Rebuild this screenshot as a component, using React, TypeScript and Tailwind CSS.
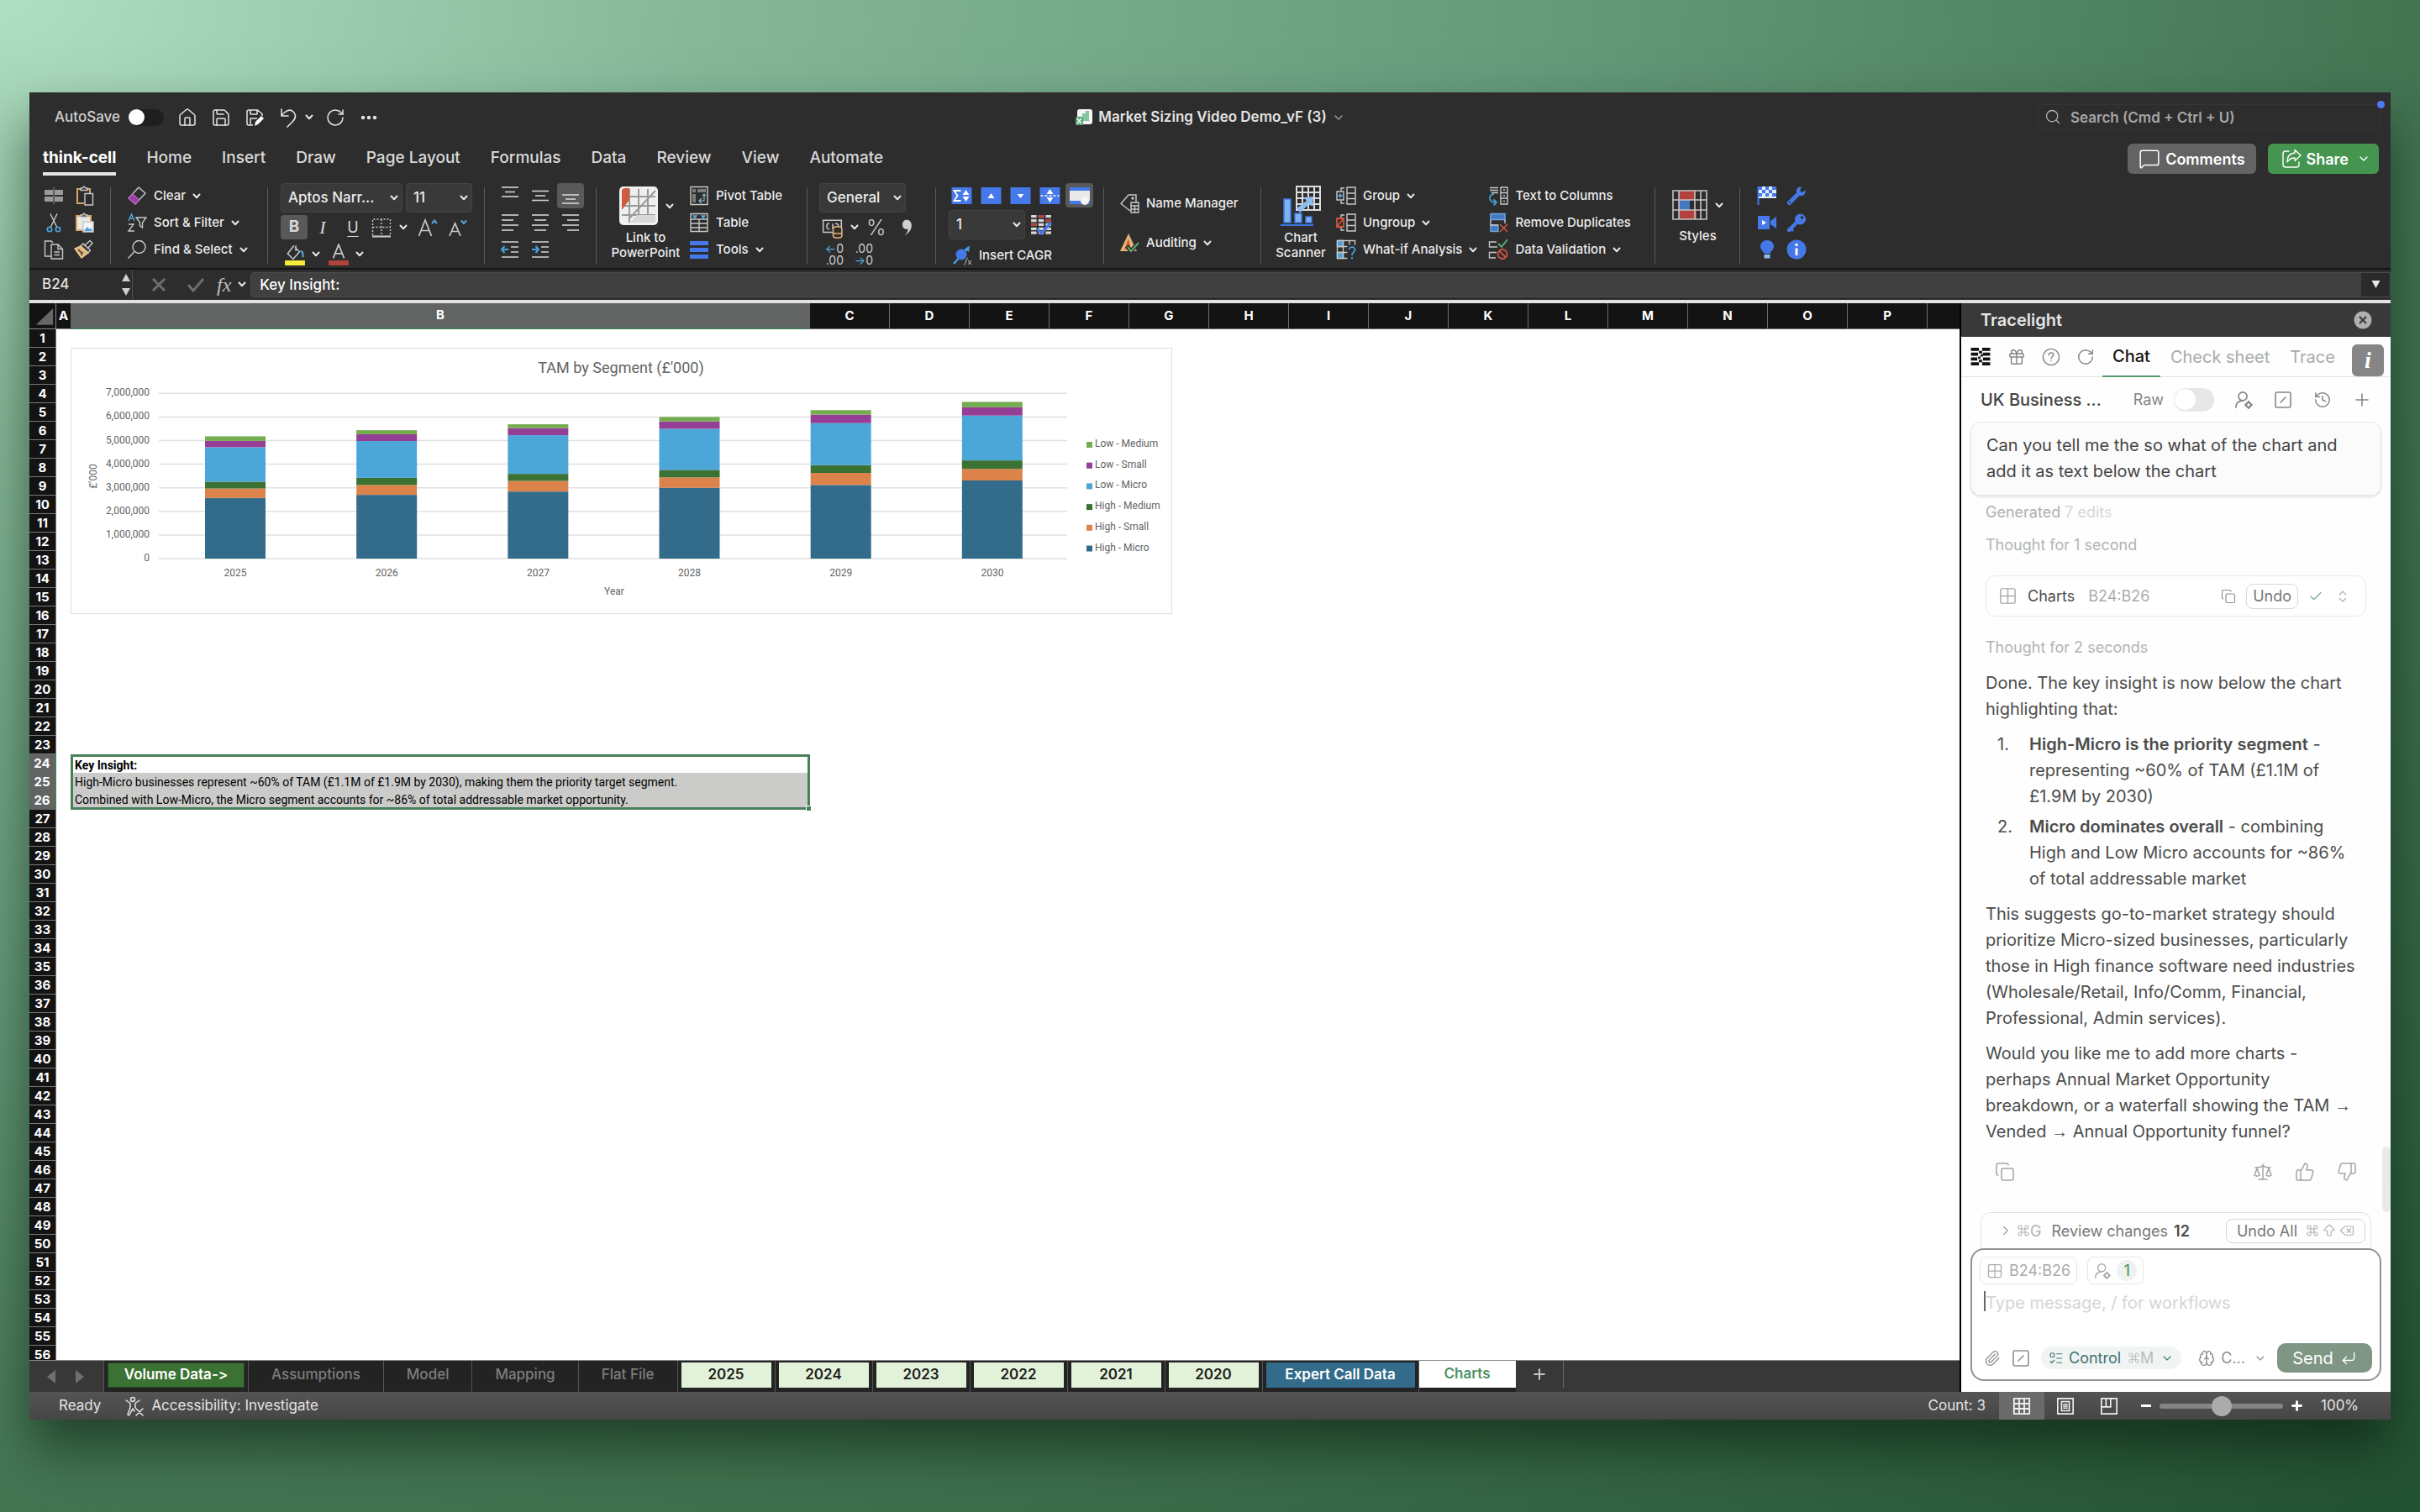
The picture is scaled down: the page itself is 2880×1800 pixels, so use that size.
import { useState } from 'react'
import type { ReactNode } from 'react'
import {
    ArrowBigUp,
    Brain,
    Check,
    ChevronDown,
    ChevronRight,
    ChevronsUpDown,
    Command,
    Copy,
    CornerDownLeft,
    Delete,
    Ellipsis,
    Gift,
    Grid2x2,
    History,
    House,
    ListTodo,
    MessageSquare,
    Paperclip,
    Plus,
    RotateCw,
    Save,
    Scale,
    Search,
    SquareSlash,
    ThumbsDown,
    ThumbsUp
} from 'lucide-react'

const MENU_TABS = ['think-cell', 'Home', 'Insert', 'Draw', 'Page Layout', 'Formulas', 'Data', 'Review', 'View', 'Automate']
const COLUMNS = ['C', 'D', 'E', 'F', 'G', 'H', 'I', 'J', 'K', 'L', 'M', 'N', 'O', 'P']
const ROWS = Array.from({ length: 56 }, (_, i) => i + 1)

const CELLS: Record<number, string> = {
    24: 'Key Insight:',
    25: 'High-Micro businesses represent ~60% of TAM (£1.1M of £1.9M by 2030), making them the priority target segment.',
    26: 'Combined with Low-Micro, the Micro segment accounts for ~86% of total addressable market opportunity.'
}

const SERIES = [
    { name: 'High - Micro', color: '#336b8b' },
    { name: 'High - Small', color: '#db834a' },
    { name: 'High - Medium', color: '#3b7233' },
    { name: 'Low - Micro', color: '#4ca6d8' },
    { name: 'Low - Small', color: '#953e95' },
    { name: 'Low - Medium', color: '#74ac50' }
]

// running totals per year, in millions
const TAM = [
    { year: 2025, tops: [2.57, 2.97, 3.26, 4.72, 4.99, 5.18] },
    { year: 2026, tops: [2.7, 3.12, 3.42, 4.98, 5.27, 5.44] },
    { year: 2027, tops: [2.84, 3.29, 3.59, 5.23, 5.53, 5.69] },
    { year: 2028, tops: [3.0, 3.44, 3.76, 5.5, 5.81, 6.0] },
    { year: 2029, tops: [3.12, 3.63, 3.96, 5.74, 6.1, 6.29] },
    { year: 2030, tops: [3.31, 3.8, 4.16, 6.06, 6.41, 6.64] }
]

type SheetTab = { name: string; kind: 'green' | 'plain' | 'year' | 'blue' | 'active' }

const SHEET_TABS: SheetTab[] = [
    { name: 'Volume Data->', kind: 'green' },
    { name: 'Assumptions', kind: 'plain' },
    { name: 'Model', kind: 'plain' },
    { name: 'Mapping', kind: 'plain' },
    { name: 'Flat File', kind: 'plain' },
    { name: '2025', kind: 'year' },
    { name: '2024', kind: 'year' },
    { name: '2023', kind: 'year' },
    { name: '2022', kind: 'year' },
    { name: '2021', kind: 'year' },
    { name: '2020', kind: 'year' },
    { name: 'Expert Call Data', kind: 'blue' },
    { name: 'Charts', kind: 'active' }
]

const TAB_CLASS: Record<SheetTab['kind'], string> = {
    green: 'mx-1 h-[30px] w-[163px] border border-[#1f4a1f] bg-[#3b7233] font-semibold text-white',
    plain: 'h-[30px] px-[27px] font-medium text-[#7d7d7d]',
    year: 'mx-1 h-[30px] w-[107px] bg-[#e2f2d8] font-semibold text-[#1c1c1c]',
    blue: 'mx-1 h-[30px] w-[177px] bg-[#336b8b] font-semibold text-white',
    active: 'h-8 w-[115px] self-start bg-white font-semibold text-[#4f9163]'
}

function Caret({ className = 'text-[#e8e8e8]' }: { className?: string }) {
    return (
        <svg viewBox="0 0 10 7" className={`h-[7px] w-[10px] shrink-0 ${className}`} fill="none" stroke="currentColor" strokeWidth="2" strokeLinecap="round" strokeLinejoin="round">
            <path d="M1.5 1.5 5 5.2 8.5 1.5" />
        </svg>
    )
}

function Icon({ children, size = 'size-6' }: { children: ReactNode; size?: string }) {
    return (
        <svg viewBox="0 0 24 24" className={`${size} shrink-0`} fill="none" stroke="#c9c9c9" strokeWidth="1.4">
            {children}
        </svg>
    )
}

function Group({ className, children }: { className: string; children: ReactNode }) {
    return (
        <div className={`flex h-[110px] shrink-0 ${className}`}>
            <div className="flex min-w-0 flex-1">{children}</div>
            <div className="mt-[14px] h-[91px] w-px bg-[#5a5a5a]" />
        </div>
    )
}

function Tool({ icon, label, caret }: { icon: ReactNode; label: string; caret?: boolean }) {
    return (
        <button className="flex h-8 items-center gap-2 whitespace-nowrap text-[15px] font-medium text-[#ececec]">
            {icon}
            {label}
            {caret && <Caret />}
        </button>
    )
}

function IconButton({ label, className = '', children }: { label: string; className?: string; children: ReactNode }) {
    return (
        <button aria-label={label} className={`flex shrink-0 items-center justify-center ${className}`}>
            {children}
        </button>
    )
}

function DropDown({ label, value, className }: { label: string; value: string; className: string }) {
    return (
        <div className={`relative h-[35px] shrink-0 ${className}`}>
            <select
                aria-label={label}
                defaultValue={value}
                className="h-full w-full appearance-none rounded-[4px] border border-[#444] bg-[#393939] pl-2 text-[17px] font-medium text-[#ececec]"
            >
                <option>{value}</option>
            </select>
            <div className="pointer-events-none absolute inset-y-0 right-[5px] flex items-center">
                <Caret />
            </div>
        </div>
    )
}

function Lines({ rows }: { rows: [number, number, number][] }) {
    return (
        <Icon>
            {rows.map(([x1, x2, y]) => (
                <path key={y} d={`M${x1} ${y}H${x2}`} stroke="#d4d4d4" strokeWidth="1.6" />
            ))}
        </Icon>
    )
}

function TitleBar() {
    return (
        <div className="grid h-[59px] shrink-0 grid-cols-[1fr_auto_1fr] items-center text-[#e4e4e4]">
            <div className="flex items-center pl-[30px]">
                <label className="flex items-center gap-[10px] text-[17px] font-medium text-[#d0d0d0]">
                    AutoSave
                    <span className="relative flex h-5 w-[42px] items-center rounded-full bg-[#1f1f1f]">
                        <input type="checkbox" className="peer absolute inset-0 appearance-none" />
                        <span className="pointer-events-none size-[19px] rounded-full bg-white peer-checked:translate-x-5" />
                    </span>
                </label>
                <IconButton label="Home" className="ml-4"><House className="size-6" strokeWidth={1.5} /></IconButton>
                <IconButton label="Save" className="ml-4"><Save className="size-6" strokeWidth={1.5} /></IconButton>
                <IconButton label="Save as" className="ml-4">
                    <svg viewBox="0 0 24 24" className="size-6" fill="none" stroke="currentColor" strokeWidth="1.5" strokeLinejoin="round">
                        <path d="M10 21H5a2 2 0 0 1-2-2V5a2 2 0 0 1 2-2h10.500L21 7.500V10M7 3v5h8V3M7 21v-8h8" />
                        <path d="m12 22 1-5 7-7 3 3-7 7z" fill="#fff" stroke="none" />
                    </svg>
                </IconButton>
                <IconButton label="Undo" className="ml-4">
                    <svg viewBox="0 0 24 24" className="size-6" fill="none" stroke="currentColor" strokeWidth="1.6" strokeLinecap="round" strokeLinejoin="round">
                        <path d="M4 2v8h8M4 10C8 4 14 1 18 5s3 8-1 12l-6 6" />
                    </svg>
                </IconButton>
                <span className="ml-2"><Caret /></span>
                <IconButton label="Redo" className="ml-[14px]"><RotateCw className="size-6" strokeWidth={1.5} /></IconButton>
                <IconButton label="More" className="ml-4"><Ellipsis className="size-6" strokeWidth={2.5} /></IconButton>
            </div>
            <button className="flex items-center gap-[6px] text-[17px] font-semibold">
                <svg viewBox="0 0 22 22" className="size-[22px]">
                    <rect x="3" y="1" width="18" height="18" rx="3" fill="#f4f4f4" />
                    <path d="M9 6h4V3h4v12h-8z" fill="#86c6a0" />
                    <rect x="1" y="10" width="9" height="10" rx="1.500" fill="#58a578" />
                    <path d="m3 12 5 6M8 12l-5 6" stroke="#fff" strokeWidth="1.5" />
                </svg>
                Market Sizing Video Demo_vF (3)
                <ChevronDown className="size-4 text-[#a0a0a0]" />
            </button>
            <div className="relative flex items-center justify-end pr-[11px]">
                <div className="relative h-[31px] w-[409px]">
                    <Search className="absolute left-2 top-[5px] size-5 text-[#b4b4b4]" strokeWidth={1.6} />
                    <input
                        aria-label="Search"
                        placeholder="Search (Cmd + Ctrl + U)"
                        className="h-full w-full rounded-md border border-[#363636] bg-transparent pl-[38px] text-[17px] font-semibold placeholder:text-[#a6a6a6]"
                    />
                </div>
                <span className="absolute -top-1 right-[7px] size-[9px] rounded-full bg-[#4b7cf3]" />
            </div>
        </div>
    )
}

function MenuTabs() {
    return (
        <div className="flex h-10 shrink-0 items-start pl-4 pr-[14px]">
            <nav className="flex flex-1 gap-9 pt-[2px]">
                {MENU_TABS.map((name, i) => (
                    <button
                        key={name}
                        className={
                            i === 0
                                ? 'h-[38px] border-b-4 border-[#e6e6e6] text-[19px] font-bold text-white'
                                : 'h-[38px] border-b-4 border-transparent text-[19px] font-medium text-[#dadada]'
                        }
                    >
                        {name}
                    </button>
                ))}
            </nav>
            <div className="flex gap-[14px] pt-[2px] text-white">
                <button className="flex h-9 items-center gap-[6px] rounded-md bg-[#636363] px-[13px] text-[18px] font-semibold">
                    <MessageSquare className="size-[26px]" strokeWidth={1.4} />
                    Comments
                </button>
                <button className="flex h-9 items-center gap-[6px] rounded-md bg-[#459550] pl-4 pr-[10px] text-[18px] font-semibold">
                    <svg viewBox="0 0 24 24" className="size-6" fill="none" stroke="currentColor" strokeWidth="1.4" strokeLinecap="round" strokeLinejoin="round">
                        <path d="M9 3H5a3 3 0 0 0-3 3v13a3 3 0 0 0 3 3h13a3 3 0 0 0 3-3v-3" />
                        <path d="M16 1.500 23 8l-7 6.500V11c-4 0-7 1.500-9 5 0-6 3-10.500 9-11z" />
                    </svg>
                    Share
                    <ChevronDown className="ml-1 size-4" />
                </button>
            </div>
        </div>
    )
}

function BracketIcon({ mark }: { mark: 'plus' | 'cross' }) {
    return (
        <Icon>
            <path d="M13 2h10v20H13zM13 9h10M13 15.500h10M10 3H6v3M10 21H6v-3" />
            {mark === 'plus' ? (
                <>
                    <path d="M1 7h8v10H1z" />
                    <path d="M5 9.500v5M2.500 12h5" stroke="#58a8dc" strokeWidth="2" />
                </>
            ) : (
                <path d="M1 7h8v10H1zM1 17l8-10" stroke="#d0553c" strokeWidth="1.8" />
            )}
        </Icon>
    )
}

function BlueTile({ children }: { children: ReactNode }) {
    return (
        <svg viewBox="0 0 24 20" className="h-5 w-[25px] shrink-0">
            <rect width="24" height="20" fill="#4578e8" />
            {children}
        </svg>
    )
}

function Ribbon() {
    return (
        <div className="flex h-[110px] shrink-0 overflow-hidden">
            <Group className="w-[97px]">
                <div className="grid grid-cols-2 grid-rows-[32px_32px_32px] content-start gap-x-3 pl-[17px] pt-2">
                    <IconButton label="Insert cells">
                        <Icon>
                            <path d="M1 5h10v6H1zM13 5h10v6H13zM1 13h10v6H1zM13 13h10v6H13z" fill="#9a9a9a" stroke="none" />
                            <path d="M12 2v20" stroke="#6f6f6f" />
                        </Icon>
                    </IconButton>
                    <IconButton label="Paste">
                        <Icon>
                            <path d="M8 4H4v17h8M16 4h3v5" stroke="#d9a567" strokeWidth="2" />
                            <path d="M8 5.500V3h2l2-2 2 2h2v2.500z" />
                            <path d="M13 9.500h9.500V23H13z" fill="#2d2d2d" />
                        </Icon>
                    </IconButton>
                    <IconButton label="Cut">
                        <Icon>
                            <path d="M8 1.500 15.500 17M16 1.500 8.500 17" />
                            <circle cx="7" cy="20" r="2.700" stroke="#4aa0dc" strokeWidth="1.700" />
                            <circle cx="17" cy="20" r="2.700" stroke="#4aa0dc" strokeWidth="1.700" />
                        </Icon>
                    </IconButton>
                    <IconButton label="Paste picture">
                        <Icon>
                            <path d="M3 4h17v17H3z" fill="#e8e8e8" stroke="#d9a567" strokeWidth="2" />
                            <path d="M8 5.500V3h2l2-2 2 2h2v2.500z" fill="#555" />
                            <path d="M11 11h12v12H11z" fill="#f4f4f4" />
                            <path d="m12 22 4-5 2.500 3 1.500-1.500 2 3.500z" fill="#4aa0dc" stroke="none" />
                        </Icon>
                    </IconButton>
                    <IconButton label="Copy">
                        <Icon>
                            <path d="M9 20H1.500V2H9l2 2M9 6h8l5.500 5.500V23H9zM17 6v5.500h5.500M12.500 15h6.500M12.500 18.500h6.500" />
                        </Icon>
                    </IconButton>
                    <IconButton label="Format painter">
                        <Icon>
                            <path d="m12 8 7-6.500 3 3L16 11M8 8l9 8 2.500-3L11 5z" />
                            <path d="M8 8 1 11l8 11 8-6z" fill="#e5b577" stroke="#e5c59c" />
                            <path d="m5 12 4 4M9 19l1-4" stroke="#2d2d2d" />
                        </Icon>
                    </IconButton>
                </div>
            </Group>

            <Group className="w-[187px]">
                <div className="flex flex-col pl-[19px] pt-2">
                    <Tool label="Clear" caret icon={
                        <Icon>
                            <path d="m14 2 8 7-12 13-8-7z" strokeLinejoin="round" />
                            <path d="m7 10 7.500 7-4.500 5-8-7z" fill="#9b3fa3" stroke="#b05ab8" />
                        </Icon>
                    } />
                    <Tool label="Sort & Filter" caret icon={
                        <Icon>
                            <path d="m2 10 3.500-8L9 10M3.500 7h4" stroke="#58a8dc" />
                            <path d="M2 14h6L2 22h7M11 6h12l-4.500 6v6l-3-2v-4z" />
                        </Icon>
                    } />
                    <Tool label="Find & Select" caret icon={
                        <Icon>
                            <circle cx="14.500" cy="9" r="7.500" />
                            <path d="m9 14.500-7.500 8" />
                        </Icon>
                    } />
                </div>
            </Group>

            <Group className="w-[258px]">
                <div className="flex flex-col gap-[3px] pl-[15px] pt-[9px]">
                    <div className="flex gap-1">
                        <DropDown label="Font" value="Aptos Narr..." className="w-[145px]" />
                        <DropDown label="Font size" value="11" className="w-[79px]" />
                    </div>
                    <div className="flex h-[29px] items-center text-[#d8d8d8]">
                        <button className="h-[29px] w-8 rounded-[4px] bg-[#595959] text-[19px] font-bold">B</button>
                        <button className="ml-2 w-5 font-['Liberation_Serif',serif] text-[22px] italic leading-7">I</button>
                        <button className="ml-4 w-5 text-[18px] leading-7 underline underline-offset-4">U</button>
                        <IconButton label="Borders" className="ml-3">
                            <Icon>
                                <path d="M1.500 21V2h21v19M12 2v19M1.500 11.500h21" strokeDasharray="2 2" />
                                <path d="M1 22.500h22" strokeWidth="2.200" />
                            </Icon>
                        </IconButton>
                        <span className="ml-[9px]"><Caret /></span>
                        <button aria-label="Grow font" className="ml-3">
                            <Icon>
                                <path d="M1.500 22 9 3l7.500 19M4 15.500h10" strokeWidth="1.700" />
                                <path d="m17 7 3-3.500L23 7" stroke="#58a8dc" strokeWidth="2" />
                            </Icon>
                        </button>
                        <button aria-label="Shrink font" className="ml-3">
                            <Icon>
                                <path d="M2 22 8.500 7 15 22M4.500 16.500h8" strokeWidth="1.700" />
                                <path d="m16 3.500 3 3.500 3-3.500" stroke="#58a8dc" strokeWidth="2" />
                            </Icon>
                        </button>
                    </div>
                    <div className="flex h-[29px] items-center pl-1">
                        <button aria-label="Fill colour">
                            <Icon size="size-[26px]">
                                <path d="m11 2-7 9 6 6 7-8-5-5M13 2v6" />
                                <path d="M18 8c3 1 3 3 2.500 7" stroke="#58a8dc" strokeWidth="2" />
                                <path d="M1 18.500h22V24H1z" fill="#f7ec3c" stroke="none" />
                            </Icon>
                        </button>
                        <span className="ml-[7px]"><Caret /></span>
                        <button aria-label="Font colour" className="ml-[9px]">
                            <Icon size="size-[26px]">
                                <path d="m6 16 6-15 6 15M8 11h8" strokeWidth="1.600" />
                                <path d="M1 18.500h22V24H1z" fill="#b3423c" stroke="none" />
                            </Icon>
                        </button>
                        <span className="ml-[7px]"><Caret /></span>
                    </div>
                </div>
            </Group>

            <Group className="w-[133px]">
                <div className="grid grid-cols-[32px_32px_32px] grid-rows-[32px_32px_32px] content-start gap-x-1 pl-[14px] pt-2">
                    <IconButton label="Align top"><Lines rows={[[2, 22, 2], [6, 18, 7.5], [2, 22, 13]]} /></IconButton>
                    <IconButton label="Align middle"><Lines rows={[[2, 22, 6.5], [6, 18, 12], [2, 22, 17.5]]} /></IconButton>
                    <IconButton label="Align bottom" className="h-[30px] self-center rounded-[4px] bg-[#595959]"><Lines rows={[[2, 22, 11], [6, 18, 16], [2, 22, 21]]} /></IconButton>
                    <IconButton label="Align left"><Lines rows={[[2, 22, 3], [2, 16, 9], [2, 22, 15], [2, 16, 21]]} /></IconButton>
                    <IconButton label="Align centre"><Lines rows={[[2, 22, 3], [5, 19, 9], [2, 22, 15], [5, 19, 21]]} /></IconButton>
                    <IconButton label="Align right"><Lines rows={[[2, 22, 3], [8, 22, 9], [2, 22, 15], [8, 22, 21]]} /></IconButton>
                    <IconButton label="Decrease indent">
                        <Icon>
                            <path d="M2 3h20M13 9h9M13 15h9M2 21h20" stroke="#d4d4d4" />
                            <path d="M10 12H2m3.500-4L2 12l3.500 4" stroke="#4aa0dc" strokeWidth="2" />
                        </Icon>
                    </IconButton>
                    <IconButton label="Increase indent">
                        <Icon>
                            <path d="M2 3h20M13 9h9M13 15h9M2 21h20" stroke="#d4d4d4" />
                            <path d="M2 12h8M6.500 8l3.500 4-3.500 4" stroke="#4aa0dc" strokeWidth="2" />
                        </Icon>
                    </IconButton>
                </div>
            </Group>

            <Group className="w-[251px]">
                <button className="flex w-[100px] shrink-0 flex-col items-center pl-[17px] pt-3 text-[15px] font-medium leading-[18px] text-[#ececec]">
                    <span className="mb-[5px] flex items-center gap-2">
                        <svg viewBox="0 0 48 48" className="size-12">
                            <rect x="1" y="1" width="46" height="46" rx="5" fill="#efefef" />
                            <path d="M13 4v40M24 4v40M35 4v40M4 13h40M4 24h40M4 35h40M12 40 44 6" stroke="#999" strokeWidth="2" fill="none" />
                            <path d="M4 6c0-2 2-3 4-3h5v14L4 29z" fill="#cf5b3e" />
                            <path d="m14 44 8-9h22v6c0 2-1 3-3 3z" fill="#d8d8d8" />
                        </svg>
                        <Caret />
                    </span>
                    <span className="whitespace-nowrap">Link to</span>
                    <span className="whitespace-nowrap">PowerPoint</span>
                </button>
                <div className="flex flex-col pl-[10px] pt-2">
                    <Tool label="Pivot Table" icon={
                        <Icon>
                            <path d="M2 1.500h20v21H2z" />
                            <path d="M4 4h4v4H4zM10 4h10v4H10zM4 10h4v10H4z" fill="#7c7c7c" stroke="none" />
                            <path d="M18 10v8h-6m3-3-3 3 3 3M16 12l2-2 2 2" stroke="#8fb9c9" strokeWidth="1.200" />
                        </Icon>
                    } />
                    <Tool label="Table" icon={
                        <Icon>
                            <path d="M2 1.500h20v21H2zM2 8h20M2 13h20M2 18h20M12 8v14.500" />
                            <path d="m5 4 2 2.500L9 4zM15 4l2 2.500L19 4z" fill="#58a8dc" stroke="#58a8dc" />
                        </Icon>
                    } />
                    <Tool label="Tools" caret icon={
                        <Icon>
                            <path d="M1 2h22v5H1zM1 10h22v5H1zM1 18h22v5H1z" fill="#4578e8" stroke="none" />
                        </Icon>
                    } />
                </div>
            </Group>

            <Group className="w-[153px]">
                <div className="flex flex-col gap-[3px] pl-[14px] pt-[9px]">
                    <DropDown label="Number format" value="General" className="w-[103px]" />
                    <div className="flex h-[29px] items-center pl-[3px]">
                        <IconButton label="Currency">
                            <Icon size="size-[26px]">
                                <path d="M1.500 4h20v13h-20z" />
                                <path d="M8.500 7.500c-4-1-4 7 0 6M12 7.500v6M15 7.500c4 0 3 3 3 3" />
                                <path d="M12.500 13v8c0 3 9.500 3 9.500 0v-8c0-3-9.500-3-9.500 0zm0 4c0 2 9.500 2 9.500 0" fill="#2d2d2d" stroke="#e5b577" />
                            </Icon>
                        </IconButton>
                        <span className="ml-2"><Caret /></span>
                        <button className="ml-[9px] text-[25px] font-light leading-7 text-[#c9c9c9]">%</button>
                        <IconButton label="Comma style" className="ml-[15px]">
                            <svg viewBox="0 0 24 24" className="size-5" fill="#cfcfcf">
                                <path d="M12 1c4 0 7 3 7 8 0 6-4 11-10 14 3-3 5-6 5-9-5 1-8-2-8-6s2-7 6-7z" />
                            </svg>
                        </IconButton>
                    </div>
                    <div className="flex h-[29px] items-center gap-[9px] pl-[3px]">
                        <button aria-label="Increase decimal" className="w-[26px] text-right text-[14px] leading-[14px] text-[#cfcfcf]">
                            <span className="flex justify-end"><span className="text-[#58a8dc]">←</span>0</span>
                            .00
                        </button>
                        <button aria-label="Decrease decimal" className="w-[26px] text-right text-[14px] leading-[14px] text-[#cfcfcf]">
                            .00
                            <span className="flex justify-end"><span className="text-[#58a8dc]">→</span>0</span>
                        </button>
                    </div>
                </div>
            </Group>

            <Group className="w-[200px]">
                <div className="flex flex-col gap-[3px] pl-[15px] pt-[9px]">
                    <div className="flex h-[29px] items-center gap-[10px] pl-[3px]">
                        <IconButton label="Sum"><BlueTile><path d="M11 4H3l4 6-4 6h8" fill="none" stroke="#fff" strokeWidth="1.800" /><path d="m17 3 4 6h-8zM17 17l4-6h-8z" fill="#fff" /></BlueTile></IconButton>
                        <IconButton label="Up"><BlueTile><path d="m12 7 4 6H8z" fill="#fff" /></BlueTile></IconButton>
                        <IconButton label="Down"><BlueTile><path d="m12 13 4-5H8z" fill="#fff" /></BlueTile></IconButton>
                        <IconButton label="Split"><BlueTile><path d="m12 2 4 6H8zM12 18l4-6H8z" fill="#fff" /><path d="M1 10h22" stroke="#fff" strokeWidth="1.500" strokeDasharray="3 2" /></BlueTile></IconButton>
                        <IconButton label="Highlight row" className="-ml-1 h-[29px] w-[33px] rounded-[4px] bg-[#595959]">
                            <svg viewBox="0 0 26 22" className="h-[22px] w-[26px]">
                                <path d="M1 1h24v20H1z" fill="#4578e8" />
                                <path d="M1 5h24v12H1z" fill="#e9e9e9" />
                                <circle cx="19" cy="17" r="5" fill="#f5f5f5" />
                            </svg>
                        </IconButton>
                    </div>
                    <div className="flex items-center gap-[6px]">
                        <DropDown label="Decimals" value="1" className="w-[91px]" />
                        <IconButton label="Check grid">
                            <Icon size="size-[26px]">
                                {[1, 5.5, 10, 14.5, 19].map(y => (
                                    <path key={y} d={`M1 ${y}h6v3H1zM9 ${y}h6v3H9zM17 ${y}h6v3h-6z`} fill="#d6d6d6" stroke="none" />
                                ))}
                                <path d="M9 1h6v3H9zM17 5.500h6v3h-6zM1 10h6v3H1z" fill="#b3423c" stroke="none" />
                                <path d="m8 16 4 5L23 9" stroke="#4578e8" strokeWidth="3" />
                            </Icon>
                        </IconButton>
                    </div>
                    <div className="pl-1">
                        <Tool label="Insert CAGR" icon={
                            <Icon>
                                <path d="M2 22 20 2" stroke="#4a9fd8" strokeWidth="2.500" />
                                <circle cx="11" cy="11" r="6.500" fill="#4578e8" stroke="none" />
                                <path d="m15 4 6-3-1 7z" fill="#4a9fd8" stroke="none" />
                                <path d="M14 23c3 0 2-8 5-8M19 18l4 5m0-5-4 5" strokeWidth="1" />
                            </Icon>
                        } />
                    </div>
                </div>
            </Group>

            <Group className="w-[187px]">
                <div className="flex flex-col gap-[15px] pl-[18px] pt-[17px]">
                    <Tool label="Name Manager" icon={
                        <Icon>
                            <path d="M13 21 2 12.500 11 2h9v9M14 11v12h9V11zM14 15h9M14 19h9M18.500 15v8" />
                            <circle cx="16" cy="6" r="1" />
                        </Icon>
                    } />
                    <Tool label="Auditing" caret icon={
                        <Icon>
                            <path d="M1 22 11 1l10 21z" fill="#e5b577" stroke="none" />
                            <path d="m11 7-5 13h8z" fill="#cf5b3e" stroke="none" />
                            <path d="m9 16 5 6 9-10" stroke="#2d2d2d" strokeWidth="5" />
                            <path d="m10 17 4 5 9-10" stroke="#5fae78" strokeWidth="2" />
                        </Icon>
                    } />
                </div>
            </Group>

            <Group className="w-[469px]">
                <button className="flex w-[72px] shrink-0 flex-col items-center pl-[22px] pt-3 text-[15px] font-medium leading-[18px] text-[#ececec]">
                    <svg viewBox="0 0 48 48" className="mb-[5px] size-12 shrink-0">
                        <path d="M19 1h28v28H19zM19 8h28M19 15h28M19 22h28M26 1v28M33 1v28M40 1v28" fill="none" stroke="#dcdcdc" strokeWidth="2" />
                        <path d="M4 16h8v28H4zM17 33h8v11h-8zM30 37h7v7h-7z" fill="#7eb2ee" stroke="#3c7be0" strokeWidth="1.500" />
                        <path d="M0 47h39" stroke="#3c7be0" strokeWidth="2" />
                        <path d="m19 27 12-9-4-4 12-1-1 12-4-3-11 10z" fill="#8fbdf2" />
                    </svg>
                    <span>Chart</span>
                    <span>Scanner</span>
                </button>
                <div className="flex flex-col pl-[17px] pt-2">
                    <Tool label="Group" caret icon={<BracketIcon mark="plus" />} />
                    <Tool label="Ungroup" caret icon={<BracketIcon mark="cross" />} />
                    <Tool label="What-if Analysis" caret icon={
                        <Icon>
                            <path d="M1.500 1.500h21v5M1.500 1.500v21h12M1.500 8.500h12M1.500 15.500h12M8.500 1.500v21M16 1.500v5" />
                            <path d="M1.500 1.500h7v7h-7zM1.500 15.500h7v7h-7z" fill="#4aa0dc" />
                            <path d="M15.500 12c1-5 8-3 7 1-.500 2-3.500 2.500-3.500 6M19 21v2.500" stroke="#4aa0dc" strokeWidth="1.700" />
                        </Icon>
                    } />
                </div>
                <div className="flex flex-col pl-[13px] pt-2">
                    <Tool label="Text to Columns" icon={
                        <Icon>
                            <path d="M2 2.500h10M2 5.500h10M4 8.500h8M15 2h8v20h-8zM15 8.500h8M15 15h8M18 5h2M18 12h2M18 18.500h2" />
                            <path d="M7 10c-7 0-7 10 2 10M6.500 16.500 10 20l-3.500 3.500" stroke="#4aa0dc" strokeWidth="1.800" />
                        </Icon>
                    } />
                    <Tool label="Remove Duplicates" icon={
                        <Icon>
                            <path d="M3 1.500h17v7H3zM3 15h9v7.500H3z" fill="#4678c0" stroke="#6fa7e0" />
                            <path d="M3 8.500V15h9M20 8.500V13" />
                            <path d="m14 14 9 9M23 14l-9 9" stroke="#d0553c" strokeWidth="1.500" />
                        </Icon>
                    } />
                    <Tool label="Data Validation" caret icon={
                        <Icon>
                            <path d="M10 3H1.500v6H11M10 15.500H1.500V22H9" />
                            <path d="m12 5 4 4 7-9" stroke="#5fae78" strokeWidth="1.800" />
                            <circle cx="17" cy="17.500" r="5.500" stroke="#d0553c" strokeWidth="1.800" />
                            <path d="m13 13.500 8 8" stroke="#d0553c" strokeWidth="1.800" />
                        </Icon>
                    } />
                </div>
            </Group>

            <Group className="w-[101px]">
                <button className="flex flex-col items-center pl-5 pt-[17px] text-[15px] font-medium leading-[18px] text-[#ececec]">
                    <span className="mb-[10px] flex items-center gap-[9px]">
                        <svg viewBox="0 0 42 36" className="h-9 w-[42px]">
                            <path d="M8 1h19v11H8zM8 24h21v11H8z" fill="#b3423c" />
                            <path d="M8 12h13v12H8z" fill="#4678c0" />
                            <path d="M1 1h40v34H1zM1 12h40M1 24h40M8 1v34M27 1v34M34 1v34" fill="none" stroke="#c4c4c4" strokeWidth="1.600" />
                        </svg>
                        <Caret />
                    </span>
                    Styles
                </button>
            </Group>

            <div className="grid grid-cols-2 grid-rows-[32px_32px_32px] content-start gap-x-[11px] pl-5 pt-2">
                <IconButton label="Finish flag">
                    <Icon>
                        <path d="M1.500 1v22" stroke="#4578e8" strokeWidth="2" />
                        <path d="M2 1h21v14H2z" fill="#e3ebfa" stroke="none" />
                        <path d="M2 1h4v4H2zM10 1h4v4h-4zM18 1h5v4h-5zM6 5h4v4H6zM14 5h4v4h-4zM2 9h4v4H2zM10 9h4v4h-4zM18 9h5v4h-5z" fill="#4578e8" stroke="none" />
                    </Icon>
                </IconButton>
                <IconButton label="Settings">
                    <Icon>
                        <path d="M3.500 20.500 15 9" stroke="#4578e8" strokeWidth="5" strokeLinecap="round" />
                        <path d="M22.500 5.500 18.500 8 16 6l2-4.500c-4-.500-6.500 2-6 6s4 5.500 7 4.500 4-4 3.500-6.500z" fill="#4578e8" stroke="none" />
                        <circle cx="4" cy="20" r="1" fill="#2d2d2d" stroke="none" />
                    </Icon>
                </IconButton>
                <IconButton label="Video">
                    <Icon>
                        <path d="M1 4h14v16H1zM16 10l7-5v14l-7-5z" fill="#4578e8" stroke="none" />
                        <path d="m6 9 5 3-5 3z" fill="#fff" stroke="none" />
                    </Icon>
                </IconButton>
                <IconButton label="License key">
                    <Icon>
                        <path d="M3 21 14 10" stroke="#4578e8" strokeWidth="4.500" strokeLinecap="round" />
                        <circle cx="16.500" cy="8" r="6.500" fill="#4578e8" stroke="none" />
                        <circle cx="18.500" cy="6" r="1.800" fill="#2d2d2d" stroke="none" />
                        <path d="m5 19 3 3" stroke="#4578e8" strokeWidth="3" />
                    </Icon>
                </IconButton>
                <IconButton label="Tips">
                    <Icon>
                        <path d="M12 1c5 0 8 3.500 8 7.500S16 14 15.500 17h-7C8 14 4 12.500 4 8.500S7 1 12 1z" fill="#4578e8" stroke="none" />
                        <path d="M8.500 18h7v4.500h-7z" fill="#8fbdf2" stroke="none" />
                    </Icon>
                </IconButton>
                <IconButton label="About">
                    <Icon>
                        <circle cx="12" cy="12" r="11.500" fill="#4578e8" stroke="none" />
                        <path d="M12 5v3M12 10.500V19" stroke="#fff" strokeWidth="3" />
                    </Icon>
                </IconButton>
            </div>
        </div>
    )
}

function FormulaBar() {
    return (
        <div className="flex h-[37px] shrink-0 items-center border-t-2 border-[#141414] bg-[#2d2d2d] text-[#e0e0e0]">
            <div className="flex h-full w-[123px] items-center border-r border-[#505050] pl-[15px] pr-[2px]">
                <input aria-label="Name box" defaultValue="B24" className="w-full min-w-0 bg-transparent text-[17px] font-medium" />
                <svg viewBox="0 0 10 28" className="h-7 w-[10px] shrink-0" fill="#d0d0d0">
                    <path d="M5 1 10 10H0zM5 27 0 18h10z" />
                </svg>
            </div>
            <IconButton label="Cancel" className="ml-[22px]">
                <svg viewBox="0 0 18 18" className="size-[18px]" stroke="#6d6d6d" strokeWidth="3"><path d="m2 2 14 14M16 2 2 16" /></svg>
            </IconButton>
            <IconButton label="Enter" className="ml-6">
                <svg viewBox="0 0 22 18" className="h-[18px] w-[22px]" fill="none" stroke="#6d6d6d" strokeWidth="3"><path d="m2 9 6 7L20 2" /></svg>
            </IconButton>
            <button className="ml-[14px] font-['Liberation_Serif',serif] text-[24px] italic leading-7 text-[#c0c0c0]">fx</button>
            <span className="ml-2"><Caret /></span>
            <div className="ml-[5px] flex h-[30px] flex-1 items-center rounded-l-[4px] border border-[#4a4a4a] bg-[#404040]">
                <input aria-label="Formula" defaultValue="Key Insight:" className="h-full flex-1 bg-transparent pl-[10px] text-[17px] font-medium text-white" />
                <IconButton label="Expand formula bar" className="h-full w-[34px] bg-[#2a2a2a]">
                    <svg viewBox="0 0 10 9" className="h-[9px] w-[11px]" fill="#e8e8e8"><path d="M0 0h10L5 9z" /></svg>
                </IconButton>
            </div>
        </div>
    )
}

function TamChart() {
    const left = 105
    const right = 1186
    const base = 251
    const unit = 28.1
    const slot = (right - left) / TAM.length

    return (
        <svg viewBox="0 0 1311 317" className="absolute left-[49px] top-[53px] h-[317px] w-[1311px] font-['Roboto',sans-serif]" fill="#636363" fontSize="12">
            <rect x="0.5" y="0.5" width="1310" height="316" fill="#fff" stroke="#dcdedd" />
            <text x="655" y="30" textAnchor="middle" fontSize="18">TAM by Segment (£'000)</text>
            {[0, 1, 2, 3, 4, 5, 6, 7].map(n => (
                <g key={n}>
                    <path d={`M${left} ${base - n * unit}H${right}`} stroke="#dfe0e0" strokeWidth="1.5" />
                    <text x="94" y={base - n * unit + 3} textAnchor="end">{(n * 1000000).toLocaleString('en-GB')}</text>
                </g>
            ))}
            {TAM.map((row, i) => (
                <g key={row.year}>
                    {row.tops.map((top, s) => {
                        const from = s === 0 ? 0 : row.tops[s - 1]
                        return (
                            <rect
                                key={SERIES[s].name}
                                x={left + i * slot + 55}
                                y={base - top * unit}
                                width="72"
                                height={(top - from) * unit}
                                fill={SERIES[s].color}
                            />
                        )
                    })}
                    <text x={left + (i + 0.5) * slot + 1} y="272" textAnchor="middle">{row.year}</text>
                </g>
            ))}
            <text x="647" y="294" textAnchor="middle">Year</text>
            <text transform="translate(31 153) rotate(-90)" textAnchor="middle">£'000</text>
            {[...SERIES].reverse().map((s, i) => (
                <g key={s.name}>
                    <rect x="1209" y={112 + i * 24.7} width="7" height="7" fill={s.color} />
                    <text x="1219" y={118 + i * 24.7}>{s.name}</text>
                </g>
            ))}
        </svg>
    )
}

function cellClass(row: number) {
    if (row === 24) return 'border-x-[3px] border-t-[3px] border-[#4a7f5b] bg-white font-bold leading-5'
    if (row === 25) return 'border-x-[3px] border-[#4a7f5b] bg-[#cbcbca] leading-[23px]'
    return 'border-x-[3px] border-b-[3px] border-[#4a7f5b] bg-[#cbcbca] leading-[21px]'
}

function Sheet() {
    return (
        <div className="relative min-h-0 flex-1 overflow-hidden bg-white">
            <table className="w-full table-fixed border-separate border-spacing-0">
                <colgroup>
                    <col className="w-8" />
                    <col className="w-[17px]" />
                    <col className="w-[880px]" />
                    {COLUMNS.map(c => <col key={c} className="w-[95px]" />)}
                    <col />
                </colgroup>
                <thead>
                    <tr className="h-[31px] bg-[#131313] text-[15px] font-semibold text-white">
                        <th aria-label="Select all" className="border-b border-r border-[#8a8a8a] p-0">
                            <svg viewBox="0 0 32 30" className="block h-[30px] w-[31px]"><path d="M29 6v20H8z" fill="#666" /></svg>
                        </th>
                        <th className="border-b border-[#8a8a8a] p-0">A</th>
                        <th className="border-b-2 border-[#4d7a5c] bg-[#626463] p-0">B</th>
                        {COLUMNS.map(c => <th key={c} className="border-b border-r border-[#6b6b6b] p-0">{c}</th>)}
                        <th className="border-b border-[#6b6b6b] p-0" />
                    </tr>
                </thead>
                <tbody>
                    {ROWS.map(row => {
                        const selected = row in CELLS
                        return (
                            <tr key={row} className="h-[22px]">
                                <th
                                    scope="row"
                                    className={
                                        selected
                                            ? 'border-b border-r-2 border-b-[#626463] border-r-[#4d7a5c] bg-[#626463] p-0 text-[15px] font-bold leading-5 text-white'
                                            : 'border-b border-r border-[#777] bg-[#131313] p-0 text-[15px] font-bold leading-5 text-white'
                                    }
                                >
                                    {row}
                                </th>
                                <td className="p-0" />
                                <td className="p-0">
                                    {selected && (
                                        <div className={`relative h-[22px] whitespace-nowrap pl-[2px] font-['Roboto',sans-serif] text-[14px] text-black ${cellClass(row)}`}>
                                            {CELLS[row]}
                                            {row === 26 && <span className="absolute -bottom-[5px] -right-[5px] size-[7px] border border-white bg-[#4a7f5b]" />}
                                        </div>
                                    )}
                                </td>
                                <td colSpan={15} className="p-0" />
                            </tr>
                        )
                    })}
                </tbody>
            </table>
            <TamChart />
        </div>
    )
}

function SheetTabs() {
    return (
        <div className="flex h-[38px] shrink-0 border-t border-[#8a8a8a] bg-[#383838] text-[17px] [font-variant-ligatures:none]">
            <div className="flex w-[88px] items-center gap-6 pl-[21px]">
                <IconButton label="Previous sheet">
                    <svg viewBox="0 0 10 16" className="h-4 w-[10px]" fill="#6f6f6f"><path d="M10 0v16L0 8z" /></svg>
                </IconButton>
                <IconButton label="Next sheet">
                    <svg viewBox="0 0 10 16" className="h-4 w-[10px]" fill="#6f6f6f"><path d="M0 0v16l10-8z" /></svg>
                </IconButton>
            </div>
            <div className="flex bg-[#232323]">
                {SHEET_TABS.map(tab => (
                    <div key={tab.name} className="flex h-[37px] items-center border-l border-[#555] pb-[3px]">
                        <button className={`whitespace-nowrap ${TAB_CLASS[tab.kind]}`}>{tab.name}</button>
                    </div>
                ))}
            </div>
            <IconButton label="New sheet" className="h-8 w-[57px] border-r border-[#6b6b6b] text-[#c4c4c4]">
                <Plus className="size-5" strokeWidth={2.5} />
            </IconButton>
        </div>
    )
}

function UserGear({ className }: { className: string }) {
    return (
        <svg viewBox="0 0 24 24" className={className} fill="none" stroke="currentColor" strokeWidth="1.800" strokeLinecap="round">
            <circle cx="11" cy="7.500" r="5.500" />
            <path d="M2 22c0-5 3-8.500 9-9" />
            <circle cx="18.500" cy="18.500" r="3" strokeWidth="2.200" />
            <path d="M18.500 14v1M18.500 22v1M14 18.500h1M22 18.500h1" strokeWidth="2.200" />
        </svg>
    )
}

function TracelightLogo() {
    return (
        <svg viewBox="0 0 24 22" className="h-[21px] w-6" fill="#111">
            <path d="M0 0h10v4H0zM14 0h10v4H14zM10 4h4v3h-4zM0 6h9v4H0zM15 6h9v4h-9zM12 8h3v3h-3zM9 11h3v3H9zM0 12h8v4H0zM15 12h9v4h-9zM10 15h4v3h-4zM0 18h10v4H0zM14 18h10v4H14z" />
        </svg>
    )
}

function PanelHeader() {
    const [raw, setRaw] = useState(false)

    return (
        <>
            <div className="flex h-10 shrink-0 items-center justify-between bg-[#393939] pl-[23px] pr-[22px] text-[20px] font-semibold text-[#e6e6e6]">
                Tracelight
                <IconButton label="Close panel">
                    <svg viewBox="0 0 22 22" className="size-[22px]">
                        <circle cx="11" cy="11" r="10.500" fill="#b0b0b0" />
                        <path d="m7 7 8 8M15 7l-8 8" stroke="#393939" strokeWidth="2.200" />
                    </svg>
                </IconButton>
            </div>
            <div className="flex h-12 shrink-0 items-center border-b border-[#dfe3e1] pl-[11px] pr-2 text-[20px] text-[#a9abaa]">
                <TracelightLogo />
                <IconButton label="What's new" className="ml-5 text-[#858585]"><Gift className="size-[22px]" strokeWidth={1.6} /></IconButton>
                <IconButton label="Help" className="ml-[19px] text-[#858585]">
                    <svg viewBox="0 0 24 24" className="size-[22px]" fill="none" stroke="currentColor" strokeWidth="1.600" strokeLinecap="round">
                        <circle cx="12" cy="12" r="10.500" />
                        <path d="M9 9.500c0-4 6-4 6-.5 0 2.500-3 2.500-3 5M12 17v.1" />
                    </svg>
                </IconButton>
                <IconButton label="Refresh" className="ml-[19px] text-[#858585]"><RotateCw className="size-[22px]" strokeWidth={1.6} /></IconButton>
                <button className="ml-[9px] h-12 shrink-0 border-b-2 border-[#5a9b6d] px-3 font-medium text-[#161616]">Chat</button>
                <button className="ml-3 shrink-0">Check sheet</button>
                <button className="ml-6 flex-1 text-left">Trace</button>
                <IconButton label="Info" className="mt-[9px] h-[38px] w-[38px] rounded-md bg-[#858585] text-white">
                    <span className="font-['Liberation_Serif',serif] text-[28px] font-bold italic leading-8">i</span>
                </IconButton>
            </div>
            <div className="flex h-[53px] shrink-0 items-center pl-[23px] pr-[22px] text-[#858585]">
                <button className="flex-1 whitespace-nowrap text-left text-[20px] font-medium text-[#444]">UK Business ...</button>
                <label className="flex items-center gap-3 text-[18px]">
                    Raw
                    <span className="relative flex h-7 w-12 items-center rounded-full bg-[#e6e8e7] px-px">
                        <input type="checkbox" checked={raw} onChange={() => setRaw(r => !r)} className="absolute inset-0 appearance-none" />
                        <span className={raw ? 'pointer-events-none ml-5 size-[25px] rounded-full bg-white' : 'pointer-events-none size-[25px] rounded-full bg-white'} />
                    </span>
                </label>
                <IconButton label="Profile settings" className="ml-6"><UserGear className="size-[22px]" /></IconButton>
                <IconButton label="Workflows" className="ml-6"><SquareSlash className="size-6" strokeWidth={1.6} /></IconButton>
                <IconButton label="History" className="ml-6"><History className="size-[22px]" strokeWidth={1.6} /></IconButton>
                <IconButton label="New chat" className="ml-6"><Plus className="size-6" strokeWidth={1.6} /></IconButton>
            </div>
        </>
    )
}

function Arrow() {
    return <span className="font-['Liberation_Sans',sans-serif]">→</span>
}

function Conversation() {
    return (
        <div className="relative min-h-0 flex-1 overflow-hidden px-[11px] text-[20px] leading-[31px] text-[#4c4c4c]">
            <div className="rounded-xl border border-[#e3e7e5] bg-[#fbfbfb] px-[18px] py-3 text-[#444] shadow-[0_2px_3px_rgba(0,0,0,0.10)]">
                Can you tell me the so what of the chart and add it as text below the chart
            </div>
            <div className="px-[18px]">
                <p className="mt-1 text-[18px] text-[#adafae]">Generated <span className="text-[#d6d8d7]">7 edits</span></p>
                <p className="mt-2 text-[18px] text-[#b2b4b3]">Thought for 1 second</p>
                <div className="mt-[21px] flex h-[49px] items-center rounded-xl border border-[#e6e9e8] bg-white pl-[14px] pr-[18px] text-[18px] text-[#aaacab]">
                    <Grid2x2 className="size-[23px]" strokeWidth={1.5} />
                    <span className="ml-3 text-[#4c4c4c]">Charts</span>
                    <span className="ml-4 flex-1">B24:B26</span>
                    <IconButton label="Copy range" className="text-[#8d8f8e]"><Copy className="size-[18px]" strokeWidth={1.6} /></IconButton>
                    <button className="ml-3 h-[30px] rounded-lg border border-[#d5d8d6] px-[7px] leading-7 text-[#777]">Undo</button>
                    <Check className="ml-3 size-[18px] text-[#7fb192]" strokeWidth={1.8} />
                    <IconButton label="Expand" className="ml-[14px]"><ChevronsUpDown className="size-[18px]" strokeWidth={1.5} /></IconButton>
                </div>
                <p className="mt-[21px] text-[18px] text-[#b2b4b3]">Thought for 2 seconds</p>
                <p className="mt-3">Done. The key insight is now below the chart highlighting that:</p>
                <ol className="mt-[11px] flex flex-col gap-[5px] pr-3">
                    <li className="flex">
                        <span className="w-[52px] shrink-0 pl-[14px]">1.</span>
                        <span><strong className="font-semibold">High-Micro is the priority segment</strong> - representing ~60% of TAM (£1.1M of £1.9M by 2030)</span>
                    </li>
                    <li className="flex">
                        <span className="w-[52px] shrink-0 pl-[14px]">2.</span>
                        <span><strong className="font-semibold">Micro dominates overall</strong> - combining High and Low Micro accounts for ~86% of total addressable market</span>
                    </li>
                </ol>
                <p className="mt-[11px]">
                    This suggests go-to-market strategy should prioritize Micro-sized businesses, particularly those in High finance software need industries (Wholesale/Retail, Info/Comm, Financial, Professional, Admin services).
                </p>
                <p className="mt-[11px] pr-1">
                    Would you like me to add more charts - perhaps Annual Market Opportunity breakdown, or a waterfall showing the TAM <Arrow /> Vended <Arrow /> Annual Opportunity funnel?
                </p>
                <div className="mt-5 flex items-center gap-[26px] px-[11px] text-[#a3a5a4]">
                    <IconButton label="Copy reply" className="mr-auto"><Copy className="size-6" strokeWidth={1.5} /></IconButton>
                    <IconButton label="Compare"><Scale className="size-6" strokeWidth={1.5} /></IconButton>
                    <IconButton label="Good reply"><ThumbsUp className="size-6" strokeWidth={1.5} /></IconButton>
                    <IconButton label="Bad reply"><ThumbsDown className="size-6" strokeWidth={1.5} /></IconButton>
                </div>
            </div>
            <div className="absolute bottom-0 right-0 h-[78px] w-[10px] rounded-full bg-[#e9ebea]" />
        </div>
    )
}

function Composer() {
    return (
        <div className="shrink-0 px-[11px] pb-[13px]">
            <div className="mx-3 flex h-[43px] items-center rounded-t-xl border border-b-0 border-[#e0e4e2] pl-5 pr-[6px] text-[18px] text-[#b0b2b1]">
                <button className="flex flex-1 items-center">
                    <ChevronRight className="size-[18px] text-[#9a9c9b]" strokeWidth={1.6} />
                    <Command className="ml-1 size-4" strokeWidth={1.6} />G
                    <span className="ml-3 text-[#777]">Review changes</span>
                    <span className="ml-[7px] font-semibold text-[#4c4c4c]">12</span>
                </button>
                <button className="flex h-[29px] items-center rounded-lg border border-[#d5d8d6] px-3 text-[#777]">
                    Undo All
                    <span className="ml-[10px] flex items-center gap-[3px] text-[#b0b2b1]">
                        <Command className="size-4" strokeWidth={1.6} />
                        <ArrowBigUp className="size-[18px]" strokeWidth={1.6} />
                        <Delete className="size-[18px]" strokeWidth={1.6} />
                    </span>
                </button>
            </div>
            <div className="flex h-[158px] flex-col rounded-2xl border-2 border-[#8f9391] bg-white px-[9px] pb-2 pt-2 text-[18px] text-[#a9abaa]">
                <div className="flex gap-3">
                    <button className="flex h-[33px] items-center gap-[7px] rounded-lg border border-[#e3e7e5] px-[7px]">
                        <Grid2x2 className="size-5" strokeWidth={1.5} />
                        B24:B26
                    </button>
                    <button className="flex h-[33px] items-center gap-[7px] rounded-lg border border-[#e3e7e5] px-[7px]">
                        <UserGear className="size-5" />
                        <span className="flex h-[25px] w-6 items-center justify-center rounded-full bg-[#eef2f0] font-medium text-[#5a9b6d]">1</span>
                    </button>
                </div>
                <div className="relative flex-1 pt-2">
                    <span className="absolute left-[5px] top-2 h-6 w-[2px] bg-[#666]" />
                    <textarea
                        aria-label="Message"
                        placeholder="Type message, / for workflows"
                        className="h-[31px] w-full resize-none bg-transparent pl-[7px] text-[20px] leading-7 text-[#4c4c4c] placeholder:text-[#d3d6d4]"
                    />
                </div>
                <div className="flex h-[35px] items-center text-[#8d8f8e]">
                    <IconButton label="Attach file" className="ml-[5px]"><Paperclip className="size-5" strokeWidth={1.6} /></IconButton>
                    <IconButton label="Insert workflow" className="ml-3"><SquareSlash className="size-6" strokeWidth={1.6} /></IconButton>
                    <button className="ml-3 flex h-[27px] items-center rounded-full bg-[#f0f4f2] px-[9px] text-[#3f7274]">
                        <ListTodo className="size-[18px]" strokeWidth={1.6} />
                        <span className="ml-[6px]">Control</span>
                        <Command className="ml-2 size-[15px] text-[#b9bcba]" strokeWidth={1.6} />
                        <span className="text-[#b9bcba]">M</span>
                        <ChevronDown className="ml-2 size-4" strokeWidth={1.6} />
                    </button>
                    <button className="flex flex-1 items-center justify-end">
                        <Brain className="size-5" strokeWidth={1.6} />
                        <span className="ml-[7px]">C...</span>
                        <ChevronDown className="ml-[10px] mr-3 size-4" strokeWidth={1.6} />
                    </button>
                    <button className="flex h-[35px] w-[113px] items-center justify-center gap-2 rounded-[10px] bg-[#7f9684] text-[20px] text-white">
                        Send
                        <CornerDownLeft className="size-5" strokeWidth={1.6} />
                    </button>
                </div>
            </div>
        </div>
    )
}

function StatusBar() {
    return (
        <div className="flex h-[33px] shrink-0 items-center bg-linear-to-b from-[#545454] to-[#464646] text-[17px] text-[#e4e4e4]">
            <span className="pl-[35px]">Ready</span>
            <button className="ml-7 flex items-center gap-2">
                <svg viewBox="0 0 24 24" className="size-6" fill="none" stroke="#e4e4e4" strokeWidth="1.500" strokeLinecap="round" strokeLinejoin="round">
                    <circle cx="10" cy="4" r="2.500" />
                    <path d="m2 5 5 3.500V14L4 21.500c0 1.500 2 1.500 2.500 0L10 15l2 3M18 5l-5 3.500V14M14 15l8 8M22 15l-8 8" />
                </svg>
                Accessibility: Investigate
            </button>
            <span className="ml-auto">Count: 3</span>
            <IconButton label="Normal view" className="ml-4 h-full w-[54px] bg-[#6a6a6a]">
                <Icon size="size-[22px]"><path d="M2 2h20v20H2zM2 8.700h20M2 15.300h20M8.700 2v20M15.300 2v20" stroke="#f0f0f0" strokeWidth="2" /></Icon>
            </IconButton>
            <IconButton label="Page layout view" className="ml-[14px]">
                <Icon size="size-[22px]"><path d="M2 2h20v20H2zM7 6h10v12H7zM9 9.500h6M9 12h6M9 14.500h6" stroke="#f0f0f0" strokeWidth="1.800" /></Icon>
            </IconButton>
            <IconButton label="Page break view" className="ml-[30px]">
                <Icon size="size-[22px]"><path d="M2 2h20v20H2zM2 13h12V2M8 2v11" stroke="#f0f0f0" strokeWidth="1.800" /></Icon>
            </IconButton>
            <IconButton label="Zoom out" className="ml-[27px]"><span className="h-[3px] w-3 bg-white" /></IconButton>
            <input
                type="range"
                aria-label="Zoom"
                min="10"
                max="190"
                defaultValue="100"
                className="ml-[10px] h-6 w-[147px] appearance-none bg-transparent [&::-webkit-slider-runnable-track]:h-[6px] [&::-webkit-slider-runnable-track]:rounded-full [&::-webkit-slider-runnable-track]:bg-[#858585] [&::-webkit-slider-thumb]:-mt-[9px] [&::-webkit-slider-thumb]:size-6 [&::-webkit-slider-thumb]:appearance-none [&::-webkit-slider-thumb]:rounded-full [&::-webkit-slider-thumb]:bg-[#ababab]"
            />
            <IconButton label="Zoom in" className="ml-2 text-white"><Plus className="size-[17px]" strokeWidth={4} /></IconButton>
            <span className="ml-5 w-[83px]">100%</span>
        </div>
    )
}

export default function App() {
    return (
        <div className="h-screen bg-[radial-gradient(ellipse_at_top_left,#b0dfc3_0%,#86b899_20%,#659a7b_45%,#417350_72%,#235233_100%)] px-[35px] py-[110px] font-['Inter','DejaVu_Sans',sans-serif]">
            <div className="flex h-full flex-col bg-[#2d2d2d] shadow-[0_35px_60px_rgba(0,20,5,0.55)]">
                <TitleBar />
                <MenuTabs />
                <Ribbon />
                <FormulaBar />
                <div className="h-[5px] shrink-0 bg-[#2d2d2d] pt-px"><div className="h-1 bg-[#e3e1e2]" /></div>
                <div className="flex min-h-0 flex-1 bg-[#2d2d2d]">
                    <main className="flex min-w-0 flex-1 flex-col">
                        <Sheet />
                        <SheetTabs />
                    </main>
                    <aside className="flex w-[513px] shrink-0 flex-col border-l-2 border-black bg-[#fdfefd]">
                        <PanelHeader />
                        <Conversation />
                        <Composer />
                    </aside>
                </div>
                <StatusBar />
            </div>
        </div>
    )
}
